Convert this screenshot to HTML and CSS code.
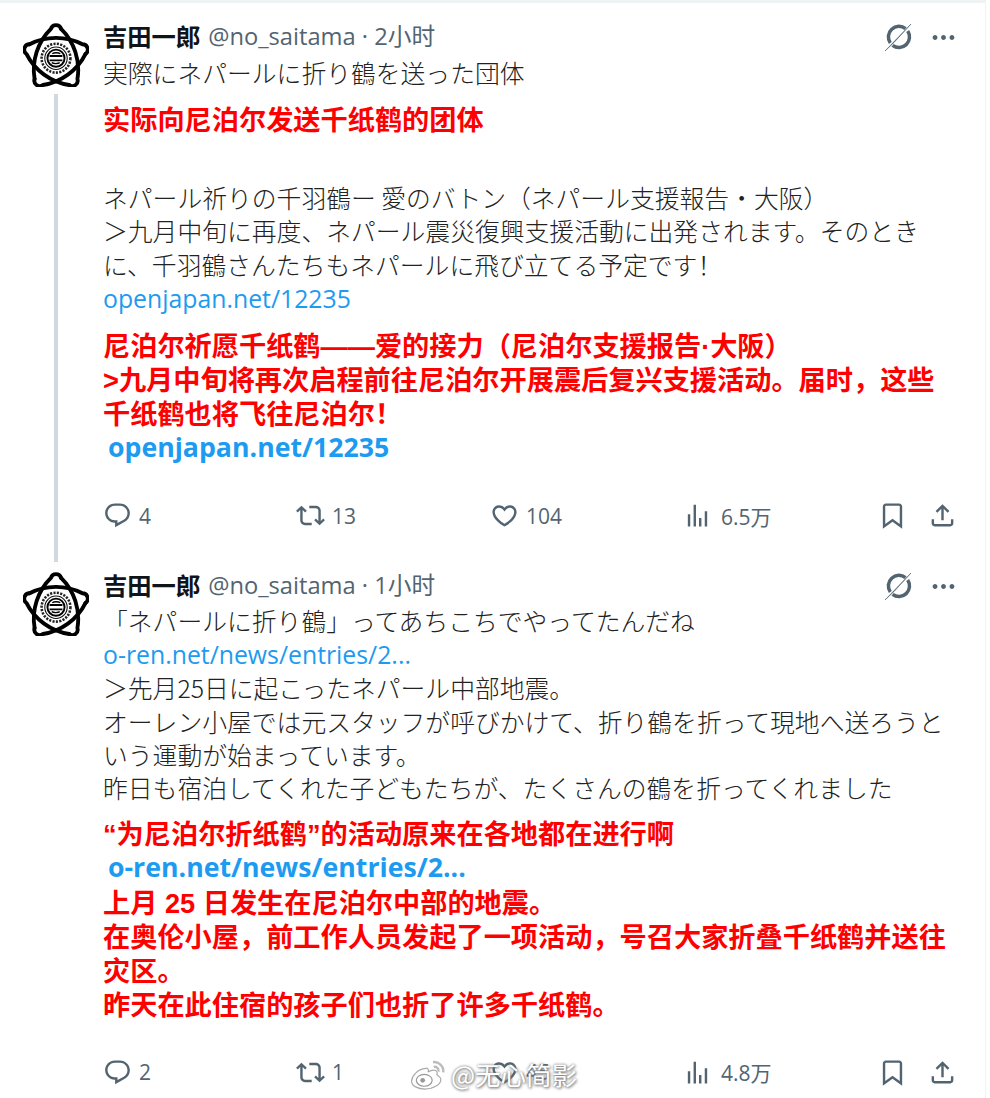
FILE: index.html
```html
<!DOCTYPE html>
<html lang="zh">
<head>
  <meta charset="UTF-8" />
  <meta name="viewport" content="width=device-width, initial-scale=1.0"/>
  <title>吉田一郎 thread</title>
  <link rel="stylesheet" href="styles.css">
</head>
<body>
  <svg class="icon-defs" aria-hidden="true">
    <symbol id="i-avatar" viewBox="2.100 .5 61.800 59">
      <g fill="none" stroke="#000" stroke-width="3.600" stroke-linecap="round" stroke-linejoin="round">
        <path id="petal" d="M37.750 5.450C49.990 17.250 56.010 35.750 53.040 52.490A5 5 0 0 1 45.340 58.080"/>
        <use href="#petal" transform="rotate(72 33 33)"/>
        <use href="#petal" transform="rotate(144 33 33)"/>
        <use href="#petal" transform="rotate(216 33 33)"/>
        <use href="#petal" transform="rotate(288 33 33)"/>
      </g>
      <circle cx="33" cy="33" r="15.500" fill="#fff"/>
      <circle cx="33" cy="33" r="13.500" fill="none" stroke="#222" stroke-width="2.400" stroke-dasharray="2 1.200"/>
      <circle cx="33" cy="33" r="10.500" fill="none" stroke="#111" stroke-width="1"/>
      <circle cx="33" cy="33" r="8" fill="none" stroke="#000" stroke-width="1.800"/>
      <path d="M27 31h12M27 35h12" stroke="#000" stroke-width="1.800" fill="none"/>
      <path d="M37 28.800c-2-1.300-6-1-7.500 0M29 37.200c2 1.300 6 1 7.500 0" stroke="#000" stroke-width="1.300" fill="none"/>
    </symbol>
    <symbol id="i-grok" viewBox="0 0 30 30">
      <path d="M21.500 6.700A10.500 10.500 0 0 0 6.300 20.900" fill="none" stroke="#536471" stroke-width="3.500"/>
      <path d="M8.600 23.300A10.500 10.500 0 0 0 23.700 9.100" fill="none" stroke="#536471" stroke-width="3.500"/>
      <path d="M1 29L27 2L10 20.500Z" fill="#536471" stroke="#536471" stroke-width=".6"/>
    </symbol>
    <symbol id="i-more" viewBox="0 0 24 24">
      <path d="M3 12c0-1.100.9-2 2-2s2 .9 2 2-.9 2-2 2-2-.9-2-2zm9 2c1.100 0 2-.9 2-2s-.9-2-2-2-2 .9-2 2 .9 2 2 2zm7 0c1.100 0 2-.9 2-2s-.9-2-2-2-2 .9-2 2 .9 2 2 2z"/>
    </symbol>
    <symbol id="i-reply" viewBox="0 0 24 24">
      <path d="M1.751 10c0-4.420 3.584-8 8.005-8h4.366c4.490 0 8.129 3.640 8.129 8.130 0 2.960-1.607 5.680-4.196 7.110l-8.054 4.460v-3.690h-.067c-4.490.1-8.183-3.510-8.183-8.010zm8.005-6c-3.317 0-6.005 2.690-6.005 6 0 3.370 2.770 6.080 6.138 6.010l.351-.01h1.761v2.300l5.087-2.810c1.951-1.080 3.163-3.130 3.163-5.360 0-3.390-2.744-6.130-6.129-6.130H9.756z"/>
    </symbol>
    <symbol id="i-retweet" viewBox="0 0 24 24">
      <path d="M4.500 3.880l4.432 4.140-1.364 1.460L5.500 7.550V16c0 1.100.896 2 2 2H13v2H7.500c-2.209 0-4-1.790-4-4V7.550L1.432 9.480.068 8.020 4.500 3.880zM16.500 6H11V4h5.500c2.209 0 4 1.790 4 4v8.450l2.068-1.930 1.364 1.460-4.432 4.140-4.432-4.140 1.364-1.460 2.068 1.930V8c0-1.100-.896-2-2-2z"/>
    </symbol>
    <symbol id="i-like" viewBox="0 0 24 24">
      <path d="M16.697 5.500c-1.222-.06-2.679.51-3.890 2.160l-.805 1.090-.806-1.090C9.984 6.010 8.526 5.440 7.304 5.500c-1.243.07-2.349.78-2.910 1.910-.552 1.120-.633 2.780.479 4.820 1.074 1.970 3.257 4.270 7.129 6.610 3.870-2.340 6.052-4.640 7.126-6.610 1.111-2.040 1.030-3.700.477-4.820-.561-1.130-1.666-1.840-2.908-1.910zm4.187 7.690c-1.351 2.480-4.001 5.120-8.379 7.670l-.503.3-.504-.3c-4.379-2.550-7.029-5.190-8.382-7.670-1.360-2.500-1.410-4.860-.514-6.670.887-1.790 2.647-2.910 4.601-3.010 1.651-.09 3.368.56 4.798 2.010 1.429-1.450 3.146-2.100 4.796-2.010 1.954.1 3.714 1.220 4.601 3.010.896 1.810.846 4.170-.514 6.670z"/>
    </symbol>
    <symbol id="i-views" viewBox="0 0 24 24">
      <path d="M8.750 21V3h2v18h-2zM18 21V8.500h2V21h-2zM4 21l.004-10h2L6 21H4zm9.248 0v-7h2v7h-2z"/>
    </symbol>
    <symbol id="i-bookmark" viewBox="0 0 24 24">
      <path d="M4 4.500C4 3.120 5.119 2 6.500 2h11C18.881 2 20 3.120 20 4.500v18.440l-8-5.710-8 5.710V4.500zM6.500 4c-.276 0-.5.220-.5.500v14.560l6-4.290 6 4.290V4.500c0-.28-.224-.5-.5-.5h-11z"/>
    </symbol>
    <symbol id="i-share" viewBox="0 0 24 24">
      <path d="M12 2.590l5.700 5.700-1.410 1.420L13 6.410V16h-2V6.410l-3.300 3.300-1.410-1.420L12 2.590zM21 15l-.02 3.510c0 1.380-1.120 2.490-2.500 2.490H5.500C4.110 21 3 19.880 3 18.500V15h2v3.500c0 .28.220.5.500.5h12.980c.28 0 .5-.22.500-.5L19 15h2z"/>
    </symbol>
    <symbol id="i-weibo" viewBox="0 0 48 40">
      <path d="M20 13C9 14 2 23 2 29c0 6 8 10 17 10 11 0 20-6 20-12 0-4-4-5-5-6 1-3 0-6-4-6-3 0-6 2-7 2 1-3-1-5-3-4z" fill="#fff" stroke="#aaa" stroke-width="1.500"/>
      <ellipse cx="18" cy="28" rx="10" ry="7.500" fill="#fff" stroke="#999" stroke-width="1.500"/>
      <circle cx="16" cy="28" r="3" fill="#999"/>
      <path d="M29 5c7-1 14 5 13 13M30 11c3-1 7 2 6 6" fill="none" stroke="#bbb" stroke-width="3"/>
    </symbol>
  </svg>

  <main class="thread">
    <article class="tweet first">
      <div class="side">
        <svg class="avatar"><use href="#i-avatar"/></svg>
        <div class="thread-line"></div>
      </div>
      <div class="body">
        <header class="head">
          <span class="name">吉田一郎</span>
          <span class="handle">@no_saitama · 2小时</span>
          <span class="head-icons">
            <svg class="grok"><use href="#i-grok"/></svg>
            <svg class="more"><use href="#i-more"/></svg>
          </span>
        </header>
        <p class="text jp">実際にネパールに折り鶴を送った団体</p>
        <p class="text red tr-a">实际向尼泊尔发送千纸鹤的团体</p>
        <p class="text jp gap-big">ネパール祈りの千羽鶴ー 愛のバトン（ネパール支援報告・大阪）<br>
          ＞九月中旬に再度、ネパール震災復興支援活動に出発されます。そのとき<br>に、千羽鶴さんたちもネパールに飛び立てる予定です！<br>
          <a class="link">openjapan.net/12235</a></p>
        <p class="text red tr-b">尼泊尔祈愿千纸鹤——爱的接力（尼泊尔支援报告·大阪）<br>
          &gt;九月中旬将再次启程前往尼泊尔开展震后复兴支援活动。届时，这些<br>千纸鹤也将飞往尼泊尔！<br>
          <a class="link indent">openjapan.net/12235</a></p>
        <footer class="actions">
          <span class="act reply"><svg><use href="#i-reply"/></svg>4</span>
          <span class="act retweet"><svg><use href="#i-retweet"/></svg>13</span>
          <span class="act like"><svg><use href="#i-like"/></svg>104</span>
          <span class="act views"><svg><use href="#i-views"/></svg>6.5万</span>
          <span class="act mark"><svg><use href="#i-bookmark"/></svg></span>
          <span class="act share"><svg><use href="#i-share"/></svg></span>
        </footer>
      </div>
    </article>

    <article class="tweet second">
      <div class="side">
        <svg class="avatar"><use href="#i-avatar"/></svg>
      </div>
      <div class="body">
        <header class="head">
          <span class="name">吉田一郎</span>
          <span class="handle">@no_saitama · 1小时</span>
          <span class="head-icons">
            <svg class="grok"><use href="#i-grok"/></svg>
            <svg class="more"><use href="#i-more"/></svg>
          </span>
        </header>
        <p class="text jp tight">「ネパールに折り鶴」ってあちこちでやってたんだね<br>
          <a class="link">o-ren.net/news/entries/2...</a><br>
          ＞先月25日に起こったネパール中部地震。<br>
          オーレン小屋では元スタッフが呼びかけて、折り鶴を折って現地へ送ろうと<br>いう運動が始まっています。<br>
          昨日も宿泊してくれた子どもたちが、たくさんの鶴を折ってくれました</p>
        <p class="text red tr-c">“为尼泊尔折纸鹤”的活动原来在各地都在进行啊<br>
          <a class="link indent">o-ren.net/news/entries/2...</a><br>
          上月 25 日发生在尼泊尔中部的地震。<br>
          在奥伦小屋，前工作人员发起了一项活动，号召大家折叠千纸鹤并送往<br>灾区。<br>
          昨天在此住宿的孩子们也折了许多千纸鹤。</p>
        <footer class="actions">
          <span class="act reply"><svg><use href="#i-reply"/></svg>2</span>
          <span class="act retweet"><svg><use href="#i-retweet"/></svg>1</span>
          <span class="act like"><svg><use href="#i-like"/></svg>45</span>
          <span class="act views"><svg><use href="#i-views"/></svg>4.8万</span>
          <span class="act mark"><svg><use href="#i-bookmark"/></svg></span>
          <span class="act share"><svg><use href="#i-share"/></svg></span>
        </footer>
      </div>
    </article>
  </main>

  <div class="watermark">
    <svg><use href="#i-weibo"/></svg>
    <span>@无心简影</span>
  </div>
</body>
</html>
```

FILE: styles.css
```css
html, body {
  margin: 0;
  padding: 0;
  background: #fff;
}

body {
  position: relative;
  height: 1098px;
  overflow: hidden;
  font-family: "Noto Sans CJK JP", "Noto Sans", sans-serif;
  color: #0f1419;
}

.icon-defs {
  display: none;
}

.thread {
  width: 986px;
  height: 1098px;
  box-sizing: border-box;
  border-top: 3px solid #eff3f4;
  border-right: 1px solid #eff3f4;
}

.tweet {
  display: grid;
  grid-template-columns: 103px 1fr;
  padding-top: 17px;
}

.tweet.first {
  height: 532px;
}

.side {
  display: flex;
  flex-direction: column;
  align-items: flex-start;
}

.avatar {
  width: 66px;
  height: 64px;
  margin-left: 23px;
  margin-top: 3px;
  flex: none;
}

.thread-line {
  width: 4px;
  flex: 1;
  margin-left: 54px;
  margin-top: 7px;
  margin-bottom: -10px;
  background: #cfd9de;
}

.body {
  min-width: 0;
}

.head {
  display: flex;
  align-items: center;
  height: 30px;
}

.name {
  font-size: 24.300px;
  font-weight: 700;
}

.handle {
  margin-left: 8px;
  font-size: 23.700px;
  color: #536471;
  font-family: "Open Sans", "Noto Sans CJK SC", sans-serif;
}

.head-icons {
  margin-left: auto;
  margin-right: 27px;
  margin-top: 4px;
  display: flex;
  align-items: center;
  gap: 15px;
}

.grok {
  width: 30px;
  height: 30px;
}

.more {
  width: 29px;
  height: 29px;
  fill: #536471;
}

.text {
  margin: 0;
  font-size: 24.800px;
  line-height: 33.500px;
  white-space: nowrap;
}

.jp {
  font-weight: 300;
  color: #222;
}

.tight {
  line-height: 33.200px;
}

.head + .text {
  margin-top: 6px;
}

.head + .tight {
  margin-top: 5px;
}

.red {
  font-family: "Liberation Sans", "Noto Sans CJK SC", sans-serif;
  font-weight: 700;
  font-size: 27.200px;
  line-height: 34px;
  color: #ff0000;
}

.tr-a {
  margin-top: 14px;
}

.gap-big {
  margin-top: 43px;
}

.tr-b {
  margin-top: 14px;
}

.tr-c {
  margin-top: 14px;
}

.link {
  color: #1d9bf0;
  font-family: "Open Sans", sans-serif;
}

.jp .link {
  font-weight: 400;
}

.red .link {
  font-size: 26.700px;
  font-weight: 700;
  position: relative;
  top: -2px;
}

.indent {
  margin-left: 5px;
}

.actions {
  display: flex;
  align-items: center;
  height: 30px;
  color: #536471;
  font-size: 21px;
  font-family: "Open Sans", "Noto Sans CJK SC", sans-serif;
}

.first .actions {
  margin-top: 34px;
}

.second .actions {
  margin-top: 34px;
}

.act {
  display: flex;
  align-items: center;
  gap: 7px;
  flex: none;
}

.act svg {
  width: 29px;
  height: 29px;
  fill: #536471;
}

.reply { width: 193px; }
.retweet { width: 194px; }
.like { width: 193px; }
.views { width: 195px; gap: 9px; }
.mark { width: 50px; }

.watermark {
  position: absolute;
  left: 410px;
  top: 1056px;
  display: flex;
  align-items: center;
  gap: 3px;
  font-family: "Noto Sans CJK SC", sans-serif;
  font-size: 25.500px;
  line-height: 36px;
  color: #fff;
  text-shadow: 0 0 3px #777, 1px 1px 3px #777;
}

.watermark svg {
  width: 38px;
  height: 32px;
}
```
